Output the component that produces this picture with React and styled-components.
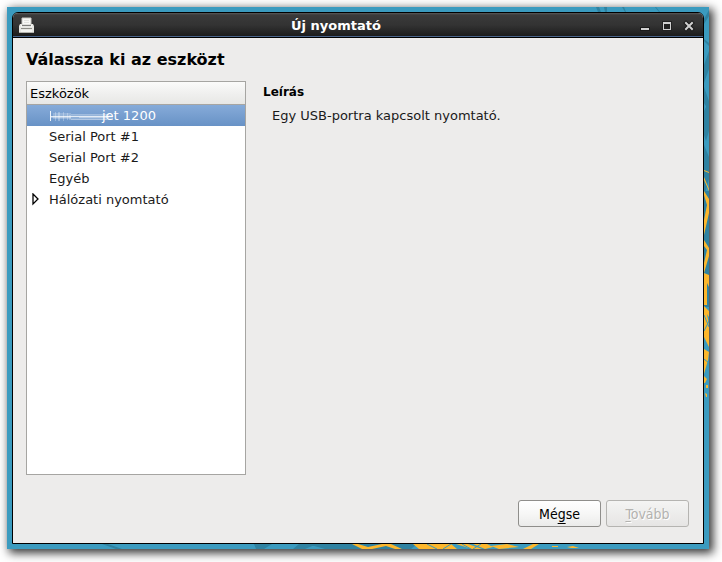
import React from "react";
import styled, { createGlobalStyle } from "styled-components";

const GlobalStyle = createGlobalStyle`
  * {
    box-sizing: border-box;
  }
  html, body, #root {
    height: 100%;
  }
  body {
    margin: 0;
    background: #fff;
    color: #000;
    font-family: "DejaVu Sans", sans-serif;
    font-size: 13px;
  }
`;

const Page = styled.div`
  height: 100%;
  padding: 7px 13px 13px 7px;
`;

const Desktop = styled.div`
  position: relative;
  height: 100%;
  padding: 5px;
  display: flex;
  background: #3b9bbf;
  box-shadow: 3px 3px 9px 1px rgba(0, 0, 0, 0.8);
`;

const WallpaperArt = styled.svg`
  position: absolute;
  inset: 0;
  width: 100%;
  height: 100%;
`;

const Dialog = styled.main`
  position: relative;
  flex: 1;
  display: flex;
  flex-direction: column;
  min-width: 0;
  border: 1px solid #000;
  border-radius: 6px 6px 0 0;
  background: #edeceb;
  overflow: hidden;
`;

const TitleBar = styled.header`
  display: flex;
  align-items: center;
  height: 25px;
  padding: 0 6px;
  border-bottom: 1px solid #000;
  background: linear-gradient(#5a5a5a, #3a3a3a 2px, #333 12px, #1c1c1c 23px);
  box-shadow: inset 0 -1px #4a648a;
`;

const Title = styled.h1`
  flex: 1;
  margin: 0;
  padding-top: 2px;
  color: #fff;
  font-size: 13px;
  line-height: 20px;
  text-align: center;
`;

const WindowButtons = styled.div`
  display: flex;
  gap: 6px;
`;

const WindowButton = styled.button`
  display: block;
  width: 16px;
  height: 16px;
  padding: 0;
  border: 0;
  background: none;

  svg {
    display: block;
  }
`;

const Body = styled.div`
  flex: 1;
  display: flex;
  flex-direction: column;
  padding: 10px 14px 16px 13px;
`;

const Heading = styled.h2`
  margin: 0;
  font-size: 16px;
  line-height: 24px;
`;

const Columns = styled.div`
  flex: 1;
  display: flex;
  gap: 17px;
  padding-top: 9px;
`;

const DeviceList = styled.section`
  width: 220px;
  border: 1px solid #a6a5a2;
  background: #fff;
`;

const ListHeader = styled.h3`
  margin: 0;
  padding: 1px 3px 0;
  border-bottom: 1px solid #a6a5a2;
  background: linear-gradient(#fbfbfa, #f0f0ef 50%, #e7e7e5);
  font-size: 13px;
  font-weight: normal;
  line-height: 21px;
`;

const Devices = styled.ul`
  margin: 0;
  padding: 0;
  list-style: none;
`;

const Device = styled.button`
  display: flex;
  align-items: center;
  width: 100%;
  height: 21px;
  padding: 0;
  border: 0;
  background: ${p => (p.$selected ? "linear-gradient(#86abd9, #6892c6)" : "none")};
  color: ${p => (p.$selected ? "#fff" : "#1a1a1a")};
  font: inherit;
  line-height: 21px;
  text-align: left;
`;

const Expander = styled.span`
  display: flex;
  width: 22px;
  padding-left: 5px;
`;

const Description = styled.section`
  flex: 1;
`;

const DescriptionTitle = styled.h3`
  margin: 0;
  font-size: 12px;
  line-height: 22px;
`;

const DescriptionText = styled.p`
  margin: 0;
  padding: 2px 9px;
  color: #1a1a1a;
  line-height: 22px;
`;

const Actions = styled.footer`
  display: flex;
  justify-content: flex-end;
  gap: 5px;
  padding-top: 25px;
`;

const ActionButton = styled.button`
  width: 83px;
  height: 27px;
  padding: 0;
  border: 1px solid #8f8e8b;
  border-radius: 3px;
  background: linear-gradient(#fff, #f7f7f6 50%, #ebebea);
  color: #000;
  font: 14px/20px "DejaVu Sans Condensed", "DejaVu Sans", sans-serif;

  &:disabled {
    border-color: #b5b4b1;
    background: linear-gradient(#f4f4f3, #e6e5e4);
    color: #b3b2af;
    text-shadow: 1px 1px #fff;
  }
`;

const Mnemonic = styled.u`
  text-decoration-skip-ink: none;
  text-decoration-thickness: 1px;
  text-underline-offset: ${p => (p.$descender ? "4px" : "2px")};
`;

const Wallpaper = () => (
  <WallpaperArt viewBox="0 0 702 542" preserveAspectRatio="none" aria-hidden="true">
    <g fill="#2f82a1">
      <path d="M589 0h3l2 5h-3zM597 0h3v5h-2zM615 0h2l2 5h-1zM648 0h1l4 5h-1z" />
      <path d="M697 12l5-9v6l-5 8zM697 32l5 4v3l-5-5zM697 58l5-14v18l-5 14zM697 80l5 14v10l-5-8z" />
      <path d="M697 104l5-10v30l-3 10-2-6zM697 138l5 12v22l-5 18zM697 184h5v116h-5z" />
      <path d="M95 537h6l14 5h-6zM247 537h18l-8 5h-8zM292 537l18 0-12 5h-12zM300 537h110l-6 5H318z" />
    </g>
    <g fill="#fdb72c">
      <path d="M697 163l5 2v1l-5-2zM697 170l5 12v2l-5-11zM697 184l5 8v14l-5 22v-15l3-15-3-10z" />
      <path d="M697 233l5 8v8l-5 17v-10l3-13-3-4zM697 266l5 2v12l-2-4v22h-3z" />
      <path d="M697 299l5 5v6l-2-3 2 11v22l-5-10zM697 342l5 3-1 8-4 14zM697 369l3 3-2 4h-1zM699 378h2v3h-2zM698 386l2 1v3h-1z" />
      <path d="M345 537h6l10 3 14-3h9l11 5h-7l-9-3-14 3h-10z" />
      <path d="M406 537h38l6 5h-38zM449 537h12l14 5h-10zM466 537h14l6 3-8 2zM484 539l16-2 12 3-20 2zM516 542l10-5h6l-8 5zM545 539h6v1h-6zM560 540l6-1 6 2h-8z" />
    </g>
    <g stroke="#3b9bbf" fill="none">
      <path d="M697 308l5 12M697 324l5-10M697 340l5 3M697 352l5 4M420 537l10 5M436 542l8-5M455 537l9 5M474 537l-8 5" />
    </g>
  </WallpaperArt>
);

const PrinterIcon = () => (
  <svg width="16" height="16" viewBox="0 0 16 16" aria-hidden="true">
    <path d="M3 1h9v7H3z" fill="#f8f8f6" stroke="#c9c9c5" />
    <path d="M5 3h5v1H5zM5 5h5v1H5z" fill="#e3e3df" />
    <path d="M1 7h2v2h9V7h2l1 2v6H0V9z" fill="#e6e6e2" />
    <path d="M2 8h1v2h9V8h1v2H2z" fill="#f7f7f5" />
    <path d="M2 11h11v1H2z" fill="#8e8e88" />
    <path d="M2 13h11v2H2z" fill="#f4f4f1" />
    <path d="M0 15h15v1H0z" fill="#b4b4ae" />
  </svg>
);

const MinimizeIcon = () => (
  <svg width="16" height="16" aria-hidden="true">
    <path d="M3 10h10v4H3z" fill="#1a1a1a" />
    <path d="M4 11h8v2H4z" fill="#d0d0d0" />
  </svg>
);

const MaximizeIcon = () => (
  <svg width="16" height="16" aria-hidden="true">
    <path d="M3 4h10v10H3z" fill="#222" />
    <path d="M4 5h8v8H4zM5 7v5h6V7z" fill="#d0d0d0" fillRule="evenodd" />
  </svg>
);

const CloseIcon = () => (
  <svg width="16" height="16" aria-hidden="true">
    <path d="M5 6l6 6M11 6l-6 6" stroke="#1a1a1a" strokeWidth="4" strokeLinecap="square" />
    <path d="M5 6l6 6M11 6l-6 6" stroke="#d0d0d0" strokeWidth="2" strokeLinecap="square" />
  </svg>
);

const ExpanderIcon = () => (
  <svg width="7" height="13" viewBox="0 0 7 13" aria-hidden="true">
    <path d="M1 1l5 5-5 5z" fill="#fff" stroke="#000" strokeWidth="1.3" />
  </svg>
);

// Covers the vendor part of a device name
const Smudge = () => (
  <svg width="53" height="16" viewBox="0 0 53 16" overflow="visible" aria-hidden="true">
    <g fill="#fff">
      <path d="M1 3h1v10H1z" opacity="0.9" />
      <path d="M2 8h57v1H2z" opacity="0.75" />
      <path d="M2 9h20v1H2zM30 9h30v1H30z" opacity="0.35" />
      <path d="M4 5h18v6H4z" opacity="0.22" />
      <path d="M6 4h1v9H6zM9 4h2v9H9zM14 4h1v9h-1zM18 5h1v7h-1z" opacity="0.28" />
      <path d="M22 6h38v1H22zM22 11h36v1H22z" opacity="0.3" />
      <path d="M20 7h44v5H20z" opacity="0.22" />
    </g>
  </svg>
);

const devices = [
  { name: "jet 1200", smudged: true, selected: true },
  { name: "Serial Port #1" },
  { name: "Serial Port #2" },
  { name: "Egyéb" },
  { name: "Hálózati nyomtató", expandable: true }
];

const App = () => (
  <>
    <GlobalStyle />
    <Page>
      <Desktop>
        <Wallpaper />
        <Dialog>
          <TitleBar>
            <PrinterIcon />
            <Title>Új nyomtató</Title>
            <WindowButtons>
              <WindowButton aria-label="Kis méret">
                <MinimizeIcon />
              </WindowButton>
              <WindowButton aria-label="Teljes méret">
                <MaximizeIcon />
              </WindowButton>
              <WindowButton aria-label="Bezárás">
                <CloseIcon />
              </WindowButton>
            </WindowButtons>
          </TitleBar>
          <Body>
            <Heading>Válassza ki az eszközt</Heading>
            <Columns>
              <DeviceList>
                <ListHeader>Eszközök</ListHeader>
                <Devices>
                  {devices.map(d => (
                    <li key={d.name}>
                      <Device $selected={d.selected}>
                        <Expander>{d.expandable && <ExpanderIcon />}</Expander>
                        {d.smudged && <Smudge />}
                        {d.name}
                      </Device>
                    </li>
                  ))}
                </Devices>
              </DeviceList>
              <Description>
                <DescriptionTitle>Leírás</DescriptionTitle>
                <DescriptionText>Egy USB-portra kapcsolt nyomtató.</DescriptionText>
              </Description>
            </Columns>
            <Actions>
              <ActionButton>
                Mé<Mnemonic $descender>g</Mnemonic>se
              </ActionButton>
              <ActionButton disabled>
                <Mnemonic>T</Mnemonic>ovább
              </ActionButton>
            </Actions>
          </Body>
        </Dialog>
      </Desktop>
    </Page>
  </>
);

export default App;
